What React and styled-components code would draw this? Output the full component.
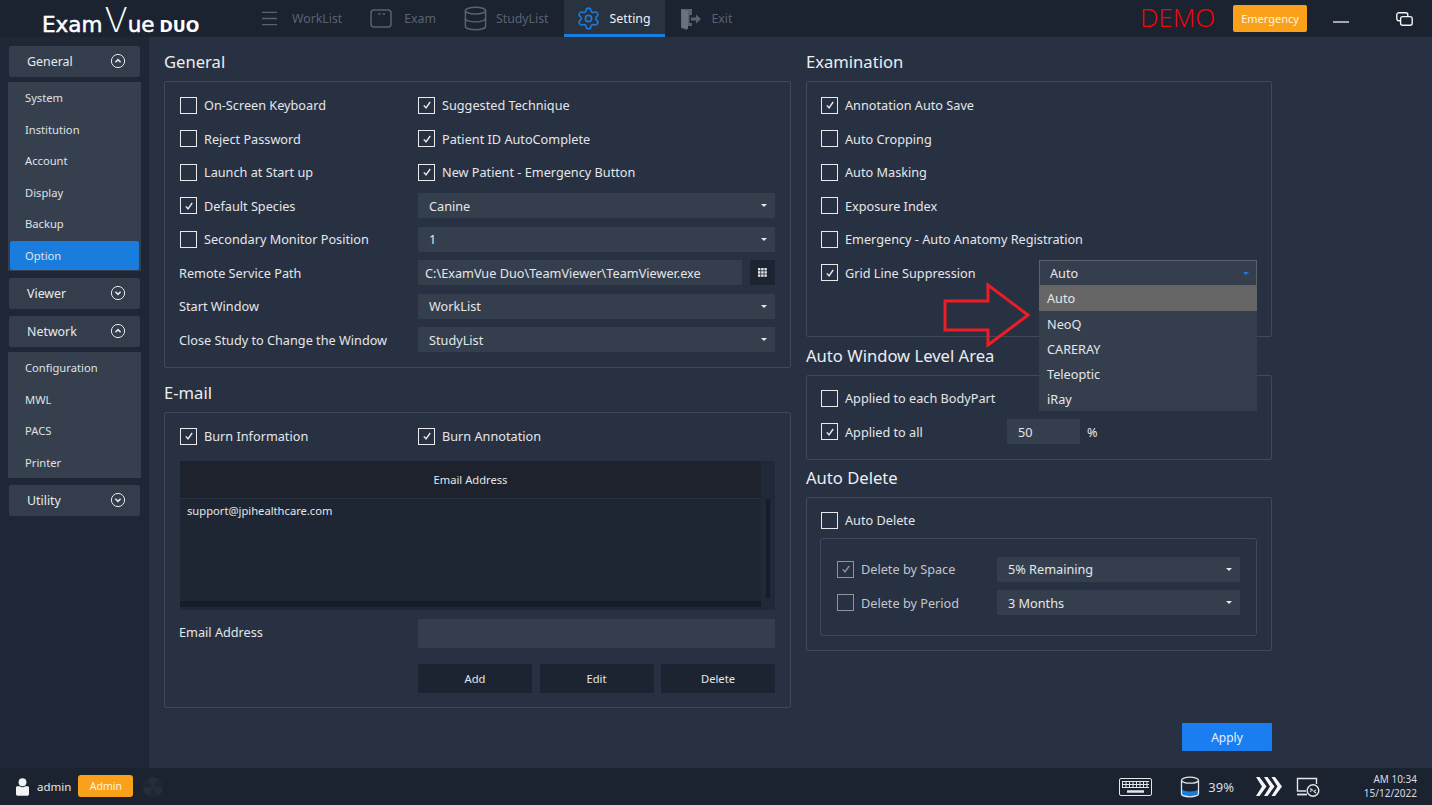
import React from "react";
import styled, { createGlobalStyle } from "styled-components";
import { Menu, Settings, Database } from "lucide-react";

const GlobalStyle = createGlobalStyle`
  html, body {
    margin: 0;
    padding: 0;
    background: #283142;
    overflow: hidden;
  }
  * {
    box-sizing: border-box;
  }
`;

const Page = styled.div`
  width: 1432px;
  height: 805px;
  display: flex;
  flex-direction: column;
  font-family: "Noto Sans", "Open Sans", sans-serif;
  font-size: 12.7px;
  color: #e4e6e9;
`;

/* top bar */
const TopBar = styled.header`
  height: 37px;
  flex: none;
  display: flex;
  align-items: stretch;
  background: #1b2331;
`;

const Logo = styled.div`
  width: 245px;
  flex: none;
  padding: 3px 0 0 42px;
  display: flex;
  align-items: baseline;
  color: #fff;
  font-family: "DejaVu Sans", sans-serif;
  white-space: nowrap;
`;

const LogoExam = styled.span`
  font-size: 21.5px;
  line-height: 30px;
  -webkit-text-stroke: 0.5px #fff;
`;

const LogoV = styled.span`
  font-size: 34px;
  line-height: 34px;
  font-weight: 200;
  margin: 0 0 0 2px;
`;

const LogoDuo = styled.span`
  font-size: 16px;
  line-height: 30px;
  font-weight: 700;
  margin-left: 5px;
`;

const NavItem = styled.div`
  display: flex;
  align-items: center;
  gap: ${(p) => p.$gap || 12}px;
  padding: 3px ${(p) => p.$pr || 14}px 0 ${(p) => p.$pl || 14}px;
  color: ${(p) => (p.$active ? "#f2f3f5" : "#5a6270")};
  background: ${(p) => (p.$active ? "#29323f" : "transparent")};
  border-bottom: 3px solid ${(p) => (p.$active ? "#1a7cdc" : "transparent")};
  font-size: 12.3px;
  white-space: nowrap;
`;

const TopRight = styled.div`
  margin-left: auto;
  display: flex;
  align-items: center;
`;

const Demo = styled.div`
  width: 93px;
  padding-bottom: 3px;
  color: #ff0000;
  font-size: 26px;
  font-family: "Open Sans", sans-serif;
  font-weight: 300;
  line-height: 34px;
`;

const EmergencyButton = styled.button`
  width: 74px;
  height: 27px;
  padding: 0;
  border: none;
  border-radius: 2px;
  background: #f9a11b;
  color: #fff4e0;
  font: inherit;
  font-size: 11px;
`;

const WindowButtons = styled.div`
  width: 125px;
  display: flex;
  align-items: center;
  padding-left: 26px;
  gap: 47px;
`;

/* body */
const Body = styled.div`
  flex: 1;
  display: flex;
  min-height: 0;
`;

const Sidebar = styled.nav`
  width: 149px;
  flex: none;
  padding: 9px 9px 0;
  display: flex;
  flex-direction: column;
  gap: 7px;
  background: #1f2736;
`;

const Group = styled.div`
  display: flex;
  flex-direction: column;
  gap: 5px;
`;

const GroupHead = styled.div`
  height: 31px;
  display: flex;
  align-items: center;
  justify-content: space-between;
  padding: 0 14px 1px 18px;
  background: #343d4c;
  border-radius: 2px;
  font-size: 12.4px;
  color: #e8eaed;
`;

const GroupList = styled.div`
  margin: 0 -1px;
  background: #363f4e;
`;

const GroupItem = styled.div`
  height: ${(p) => (p.$active ? "29px" : "31.5px")};
  margin: ${(p) => (p.$active ? "1px 2px 1.5px" : "0")};
  padding-left: ${(p) => (p.$active ? "15px" : "17px")};
  display: flex;
  align-items: center;
  font-size: 11.2px;
  color: #dfe2e6;
  background: ${(p) => (p.$active ? "#1a7cdc" : "transparent")};
  border-radius: ${(p) => (p.$active ? "2px" : "0")};
`;

const Main = styled.main`
  flex: 1;
  display: grid;
  grid-template-columns: 627px 466px;
  column-gap: 15px;
  padding: 13px 0 0 15px;
  background: #283142;
`;

const Column = styled.div`
  display: flex;
  flex-direction: column;
  padding-bottom: 17px;
`;

const Title = styled.h2`
  margin: ${(p) => p.$top || 0}px 0 0;
  padding-bottom: 7px;
  font-size: 16.6px;
  line-height: 24px;
  font-weight: 400;
  color: #eceef0;
`;

const Panel = styled.section`
  position: relative;
  border: 1px solid #404958;
  border-radius: 2px;
  padding: ${(p) => p.$pt ?? 9.5}px ${(p) => p.$pr ?? 15}px ${(p) => p.$pb ?? 15}px
    ${(p) => p.$pl ?? 14}px;
  min-height: ${(p) => p.$minH || 0}px;
`;

const Rows = styled.div`
  display: grid;
  grid-template-columns: ${(p) => p.$cols || "1fr"};
  grid-auto-rows: 25px;
  row-gap: 8.5px;
  align-items: center;
`;

const Check = styled.label`
  display: flex;
  align-items: center;
  gap: 7px;
  white-space: nowrap;
  color: ${(p) => (p.$dim ? "#c3c6cb" : "#e4e6e9")};
`;

const Box = styled.span`
  width: 17px;
  height: 17px;
  flex: none;
  display: flex;
  align-items: center;
  justify-content: center;
  border: 1.5px solid ${(p) => (p.$dim ? "#8f949c" : "#e9eaec")};
`;

const Label = styled.span`
  margin-left: -1px;
  padding-bottom: ${(p) => p.$lift || 0}px;
  white-space: nowrap;
`;

const SelectBox = styled.div`
  position: relative;
  height: 25px;
  padding: 0 11px;
  display: flex;
  align-items: center;
  justify-content: space-between;
  background: #353e4d;
  border-radius: 1px;
  ${(p) => p.$open && "border: 1px solid #5a626e; border-bottom: none; padding: 0 10px;"}
`;

const Caret = styled.span`
  width: 0;
  height: 0;
  margin-right: -3px;
  border-left: 3px solid transparent;
  border-right: 3px solid transparent;
  border-top: 3px solid ${(p) => p.$color || "#e4e6e9"};
`;

const OptionList = styled.div`
  position: absolute;
  z-index: 3;
  top: 24px;
  left: -1px;
  right: -1px;
  background: #353e4d;
`;

const MenuOption = styled.div`
  height: 25px;
  padding-left: 8px;
  display: flex;
  align-items: center;
  background: ${(p) => (p.$active ? "#666666" : "transparent")};
  &:first-child {
    height: 26px;
  }
`;

const PathRow = styled.div`
  display: flex;
  gap: 8px;
  height: 25px;
`;

const PathInput = styled.div`
  flex: 1;
  padding-left: 7px;
  display: flex;
  align-items: center;
  background: #353e4d;
  white-space: nowrap;
`;

const BrowseButton = styled.div`
  width: 25px;
  display: flex;
  align-items: center;
  justify-content: center;
  background: #1c2432;
`;

const EmailTable = styled.div`
  height: 149px;
  margin: 12.5px 0 9px;
  display: grid;
  grid-template-columns: 581px 14px;
  background: #202937;
`;

const TableMain = styled.div`
  display: flex;
  flex-direction: column;
  padding-bottom: 3px;
`;

const TableHead = styled.div`
  height: 38px;
  flex: none;
  display: flex;
  align-items: center;
  justify-content: center;
  font-size: 11.2px;
  background: #1d222d;
  border-bottom: 1px solid #29333f;
`;

const TableBody = styled.div`
  flex: 1;
  padding: 4px 7px;
  font-size: 11.2px;
  background: #1e2633;
`;

const HScroll = styled.div`
  height: 6px;
  flex: none;
  background: #161d2a;
`;

const VTrack = styled.div`
  padding: 38px 5px 12px;
  display: flex;
  justify-content: center;
`;

const VThumb = styled.div`
  width: 4px;
  height: 100%;
  background: #161d2a;
`;

const EmailField = styled.div`
  display: grid;
  grid-template-columns: 238px 1fr;
  align-items: center;
  height: 29px;
`;

const EmailInput = styled.div`
  height: 29px;
  background: #353e4d;
`;

const ButtonRow = styled.div`
  margin: 16px 0 0 238px;
  display: grid;
  grid-template-columns: repeat(3, 114px);
  justify-content: space-between;
`;

const DarkButton = styled.button`
  height: 29px;
  padding: 0;
  border: none;
  background: #1c2432;
  color: #e4e6e9;
  font: inherit;
  font-size: 11.2px;
`;

const ArrowMark = styled.svg`
  position: absolute;
  left: 133px;
  top: 197px;
  z-index: 2;
`;

const NumberInput = styled.div`
  width: 73px;
  height: 25px;
  padding-left: 11px;
  display: flex;
  align-items: center;
  background: #353e4d;
`;

const NumberRow = styled.div`
  display: flex;
  align-items: center;
  gap: 7px;
`;

const InnerPanel = styled.div`
  margin: 5.5px 0 0 -1px;
  border: 1px solid #404958;
  border-radius: 3px;
  padding: 17.5px 16px 19.5px;
`;

const ApplyButton = styled.button`
  width: 90px;
  height: 28px;
  margin-top: auto;
  align-self: flex-end;
  padding: 0;
  border: none;
  border-radius: 1px;
  background: #1a7ef0;
  color: #e8f2fd;
  font: inherit;
  font-size: 12px;
`;

/* bottom bar */
const BottomBar = styled.footer`
  height: 37px;
  flex: none;
  display: flex;
  align-items: center;
  padding: 0 15px 0 16px;
  background: #1b2331;
`;

const UserName = styled.span`
  margin: 0 7px 0 8px;
  font-size: 11.5px;
`;

const RoleBadge = styled.div`
  width: 55px;
  height: 22px;
  margin-bottom: 2px;
  display: flex;
  align-items: center;
  justify-content: center;
  background: #f9a11b;
  border-radius: 3px;
  color: #fff4e0;
  font-size: 10.5px;
`;

const Radiation = styled.svg`
  margin-left: 9px;
`;

const StatusGroup = styled.div`
  margin-left: auto;
  display: flex;
  align-items: center;
`;

const Spacer = styled.span`
  width: ${(p) => p.$w}px;
`;

const Percent = styled.span`
  margin: 0 22px 0 8px;
  font-size: 13px;
  color: #d9dce0;
`;

const Clock = styled.div`
  width: 97px;
  text-align: right;
  font-size: 10px;
  line-height: 14px;
  color: #d9dce0;
  padding-bottom: 2px;
`;

const ChevronCircle = ({ up }) => (
  <svg width="16" height="16" viewBox="0 0 16 16" fill="none" stroke="#e8eaed">
    <circle cx="8" cy="8" r="6.6" strokeWidth="1" />
    <path d={up ? "M5.4 9.2 8 6.6l2.6 2.6" : "M5.4 6.8 8 9.4l2.6-2.6"} strokeWidth="1.5" />
  </svg>
);

const CheckBox = ({ checked, dim, children }) => (
  <Check $dim={dim}>
    <Box $dim={dim}>
      {checked && (
        <svg width="10" height="10" viewBox="0 0 10 10" fill="none">
          <path
            d="M1.8 5.4 4 7.8 8.2 2"
            stroke={dim ? "#8f949c" : "#e9eaec"}
            strokeWidth="1.4"
          />
        </svg>
      )}
    </Box>
    {children}
  </Check>
);

const Select = ({ value }) => (
  <SelectBox>
    {value}
    <Caret />
  </SelectBox>
);

const ExamIcon = () => (
  <svg width="22" height="19" viewBox="0 0 22 19" fill="none" stroke="#5a6270" strokeWidth="1.5">
    <rect x="1" y="1" width="20" height="17" rx="3" />
    <path d="M8 5h2.5M12.5 5H15" />
  </svg>
);

const ExitIcon = () => (
  <svg width="22" height="22" viewBox="0 0 22 22">
    <path d="M1 1h11v6H9.5v8H12v3H7v4l-6-2z" fill="#5a6270" />
    <path d="M8 3 1.5 1.2V19L8 21z" fill="#6a7280" />
    <path d="M11 9.5h5V6.5l5 4.5-5 4.5v-3h-5z" fill="#5a6270" />
  </svg>
);

const RestoreIcon = () => (
  <svg width="17" height="14" viewBox="0 0 17 14" fill="none" stroke="#f2f3f5" strokeWidth="1.4">
    <rect x="0.8" y="0.8" width="11" height="8" rx="2" />
    <rect x="4.6" y="4.6" width="11.6" height="8.6" rx="2" fill="#1b2331" />
  </svg>
);

const BrowseIcon = () => (
  <svg width="9" height="9" viewBox="0 0 9 9" fill="#e4e6e9">
    {[0, 3.2, 6.4].map((y) =>
      [0, 3.2, 6.4].map((x) => <rect key={`${x}-${y}`} x={x} y={y} width="2.4" height="2.4" />)
    )}
  </svg>
);

const UserIcon = () => (
  <svg width="13" height="18" viewBox="0 0 14 19" fill="#f2f3f5">
    <circle cx="7" cy="4.4" r="4.2" />
    <path d="M1.5 8.6h2.4a5 5 0 0 0 6.2 0h2.4c.8 0 1.5.7 1.5 1.5V17c0 1-.8 2-2 2H2c-1.2 0-2-1-2-2v-6.900c0-.8.7-1.500 1.500-1.500z" />
  </svg>
);

const RadiationIcon = () => (
  <Radiation width="22" height="22" viewBox="0 0 22 22" fill="#262e3c">
    <circle cx="11" cy="11" r="10.500" fill="#1f2735" />
    <circle cx="11" cy="11" r="2" />
    <path d="M11 11 6 3a9.500 9.500 0 0 1 10 0zM11 11l9.500 1a9.500 9.500 0 0 1-5 8zM11 11l-4.500 9a9.500 9.500 0 0 1-5-8z" />
  </Radiation>
);

const KeyboardIcon = () => (
  <svg width="33" height="18" viewBox="0 0 33 18" fill="none" stroke="#e4e6e9" strokeWidth="1">
    <rect x="0.5" y="0.5" width="32" height="17" rx="1.500" />
    <path d="M3 3.500h27M3 6.500h27M3 9.500h27M3.500 3.500v6M7 3.500v6M10.500 3.500v6M14 3.500v6M17.500 3.500v6M21 3.500v6M24.500 3.500v6M28 3.500v6" />
    <path d="M8 13.500h17" strokeWidth="2.500" />
  </svg>
);

const DiskIcon = () => (
  <svg width="20" height="22" viewBox="0 0 20 22" fill="none">
    <path d="M1.500 13.500v4.500c0 1.500 3.800 2.800 8.500 2.800s8.500-1.300 8.500-2.800v-4.500c-1.500 1.300-4.500 2-8.500 2s-7-.7-8.500-2z" fill="#1a7cdc" />
    <path d="M1.500 4.500v13.500c0 1.500 3.800 2.800 8.500 2.800s8.500-1.300 8.500-2.800V4.500" stroke="#e4e6e9" strokeWidth="1.300" />
    <ellipse cx="10" cy="4.200" rx="8.500" ry="3" stroke="#e4e6e9" strokeWidth="1.300" />
  </svg>
);

const ForwardIcon = () => (
  <svg width="26" height="19" viewBox="0 0 26 19" fill="#f4f5f6">
    <path d="M0 0h3.500l7 9.500-7 9.500H0l6-9.500zM8 0h3.500l7 9.500-7 9.500H8l6-9.500zM15.500 0H19l7 9.500-7 9.500h-3.500l6-9.500z" />
  </svg>
);

const RemoteIcon = () => (
  <svg width="24" height="20" viewBox="0 0 24 20" fill="none" stroke="#e4e6e9" strokeWidth="1.400">
    <path d="M10 14H1.500V1.500h19V7" />
    <path d="M1 17.500h10" strokeWidth="1.800" />
    <circle cx="17" cy="13.500" r="5.800" fill="#1b2331" />
    <path d="m14 11.500 2.500 1.500-2.500 1.500M20 13l-2 1.500 2 1.500" strokeWidth="1.100" />
  </svg>
);

export default function App() {
  return (
    <Page>
      <GlobalStyle />
      <TopBar>
        <Logo>
          <LogoExam>Exam</LogoExam>
          <LogoV>V</LogoV>
          <LogoExam>ue</LogoExam>
          <LogoDuo>DUO</LogoDuo>
        </Logo>
        <NavItem>
          <Menu size={21} strokeWidth={1.6} />
          WorkList
        </NavItem>
        <NavItem>
          <ExamIcon />
          Exam
        </NavItem>
        <NavItem $pl={12} $pr={15} $gap={7}>
          <Database size={27} strokeWidth={1.3} />
          StudyList
        </NavItem>
        <NavItem $active $pl={12} $pr={15} $gap={9}>
          <Settings size={25} strokeWidth={1.5} color="#1a7cdc" />
          Setting
        </NavItem>
        <NavItem $pl={15} $gap={9}>
          <ExitIcon />
          Exit
        </NavItem>
        <TopRight>
          <Demo>DEMO</Demo>
          <EmergencyButton>Emergency</EmergencyButton>
          <WindowButtons>
            <svg width="16" height="8" viewBox="0 0 16 8">
              <path d="M0 7h16" stroke="#f2f3f5" strokeWidth="1.3" />
            </svg>
            <RestoreIcon />
          </WindowButtons>
        </TopRight>
      </TopBar>

      <Body>
        <Sidebar>
          <Group>
            <GroupHead>
              General
              <ChevronCircle up />
            </GroupHead>
            <GroupList>
              <GroupItem>System</GroupItem>
              <GroupItem>Institution</GroupItem>
              <GroupItem>Account</GroupItem>
              <GroupItem>Display</GroupItem>
              <GroupItem>Backup</GroupItem>
              <GroupItem $active>Option</GroupItem>
            </GroupList>
          </Group>
          <Group>
            <GroupHead>
              Viewer
              <ChevronCircle />
            </GroupHead>
          </Group>
          <Group>
            <GroupHead>
              Network
              <ChevronCircle up />
            </GroupHead>
            <GroupList>
              <GroupItem>Configuration</GroupItem>
              <GroupItem>MWL</GroupItem>
              <GroupItem>PACS</GroupItem>
              <GroupItem>Printer</GroupItem>
            </GroupList>
          </Group>
          <Group>
            <GroupHead>
              Utility
              <ChevronCircle />
            </GroupHead>
          </Group>
        </Sidebar>

        <Main>
          <Column>
            <Title>General</Title>
            <Panel $pt={10.5} $pl={15}>
              <Rows $cols="238px 1fr">
                <CheckBox>On-Screen Keyboard</CheckBox>
                <CheckBox checked>Suggested Technique</CheckBox>
                <CheckBox>Reject Password</CheckBox>
                <CheckBox checked>Patient ID AutoComplete</CheckBox>
                <CheckBox>Launch at Start up</CheckBox>
                <CheckBox checked>New Patient - Emergency Button</CheckBox>
                <CheckBox checked>Default Species</CheckBox>
                <Select value="Canine" />
                <CheckBox>Secondary Monitor Position</CheckBox>
                <Select value="1" />
                <Label>Remote Service Path</Label>
                <PathRow>
                  <PathInput>C:\ExamVue Duo\TeamViewer\TeamViewer.exe</PathInput>
                  <BrowseButton>
                    <BrowseIcon />
                  </BrowseButton>
                </PathRow>
                <Label>Start Window</Label>
                <Select value="WorkList" />
                <Label>Close Study to Change the Window</Label>
                <Select value="StudyList" />
              </Rows>
            </Panel>

            <Title $top={13}>E-mail</Title>
            <Panel $pt={10.5} $pl={15} $pb={14}>
              <Rows $cols="238px 1fr">
                <CheckBox checked>Burn Information</CheckBox>
                <CheckBox checked>Burn Annotation</CheckBox>
              </Rows>
              <EmailTable>
                <TableMain>
                  <TableHead>Email Address</TableHead>
                  <TableBody>support@jpihealthcare.com</TableBody>
                  <HScroll />
                </TableMain>
                <VTrack>
                  <VThumb />
                </VTrack>
              </EmailTable>
              <EmailField>
                <Label $lift={3}>Email Address</Label>
                <EmailInput />
              </EmailField>
              <ButtonRow>
                <DarkButton>Add</DarkButton>
                <DarkButton>Edit</DarkButton>
                <DarkButton>Delete</DarkButton>
              </ButtonRow>
            </Panel>
          </Column>

          <Column>
            <Title>Examination</Title>
            <Panel $minH={256} $pt={10.5}>
              <Rows $cols="218px 218px">
                <CheckBox checked>Annotation Auto Save</CheckBox>
                <span />
                <CheckBox>Auto Cropping</CheckBox>
                <span />
                <CheckBox>Auto Masking</CheckBox>
                <span />
                <CheckBox>Exposure Index</CheckBox>
                <span />
                <CheckBox>Emergency - Auto Anatomy Registration</CheckBox>
                <span />
                <CheckBox checked>Grid Line Suppression</CheckBox>
                <SelectBox $open>
                  Auto
                  <Caret $color="#1a7cdc" />
                  <OptionList>
                    <MenuOption $active>Auto</MenuOption>
                    <MenuOption>NeoQ</MenuOption>
                    <MenuOption>CARERAY</MenuOption>
                    <MenuOption>Teleoptic</MenuOption>
                    <MenuOption>iRay</MenuOption>
                  </OptionList>
                </SelectBox>
              </Rows>
              <ArrowMark width="92" height="72" viewBox="0 0 92 72" fill="none">
                <path d="M5 22h43V6l40 30-40 30V51H5z" stroke="#ee1c25" strokeWidth="3" />
              </ArrowMark>
            </Panel>

            <Title $top={7}>Auto Window Level Area</Title>
            <Panel>
              <Rows $cols="186px 1fr">
                <CheckBox>Applied to each BodyPart</CheckBox>
                <span />
                <CheckBox checked>Applied to all</CheckBox>
                <NumberRow>
                  <NumberInput>50</NumberInput>
                  %
                </NumberRow>
              </Rows>
            </Panel>

            <Title $top={6}>Auto Delete</Title>
            <Panel $pb={14} $pr={14}>
              <Rows>
                <CheckBox>Auto Delete</CheckBox>
              </Rows>
              <InnerPanel>
                <Rows $cols="160px 243px">
                  <CheckBox checked dim>
                    Delete by Space
                  </CheckBox>
                  <Select value="5% Remaining" />
                  <CheckBox dim>Delete by Period</CheckBox>
                  <Select value="3 Months" />
                </Rows>
              </InnerPanel>
            </Panel>

            <ApplyButton>Apply</ApplyButton>
          </Column>
        </Main>
      </Body>

      <BottomBar>
        <UserIcon />
        <UserName>admin</UserName>
        <RoleBadge>Admin</RoleBadge>
        <RadiationIcon />
        <StatusGroup>
          <KeyboardIcon />
          <Spacer $w={28} />
          <DiskIcon />
          <Percent>39%</Percent>
          <ForwardIcon />
          <Spacer $w={14} />
          <RemoteIcon />
          <Clock>
            AM 10:34
            <br />
            15/12/2022
          </Clock>
        </StatusGroup>
      </BottomBar>
    </Page>
  );
}
